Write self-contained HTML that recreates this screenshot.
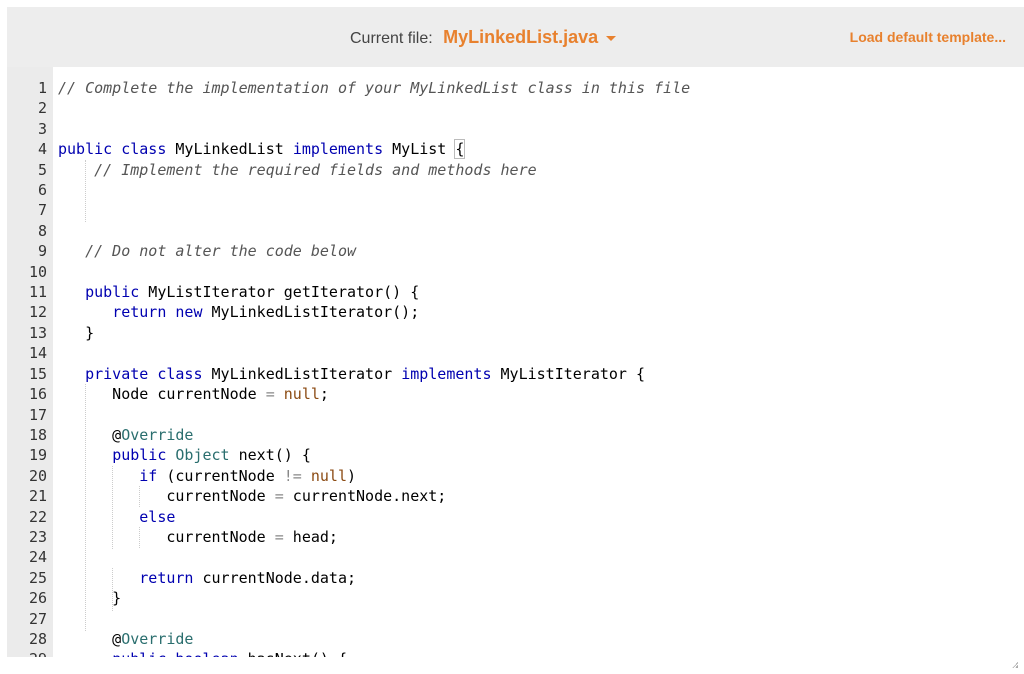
<!DOCTYPE html>
<html><head><meta charset="utf-8"><style>
body{margin:0;width:1024px;height:674px;background:#fff;overflow:hidden;font-family:"Liberation Sans",sans-serif}
.hdr{position:absolute;left:7px;top:7px;width:1017px;height:60px;background:#ededed}
.cf{position:absolute;left:350px;top:27px;font-size:16px;color:#444;white-space:nowrap}
.cf b{color:#e8812e;font-size:18px;font-weight:bold;margin-left:6px}
.tri{display:inline-block;width:0;height:0;border-left:5px solid transparent;border-right:5px solid transparent;border-top:5px solid #e8812e;vertical-align:middle;margin-left:8px}
.ld{position:absolute;right:18px;top:29px;font-size:14px;font-weight:bold;color:#e8812e}
.ed{position:absolute;left:7px;top:67px;width:1017px;height:590px;overflow:hidden}
.gut{position:absolute;left:0;top:0;width:46px;height:590px;background:#ebebeb}
pre{margin:0;position:absolute;top:11px;font-family:"DejaVu Sans Mono",monospace;font-size:15px;line-height:20.4px}
.num{left:0;width:40px;text-align:right;color:#333}
.code{left:51px;color:#000}
.c{color:#555;font-style:italic}.k{color:#0000b0}.n{color:#8b4a12}.t{color:#2a6e6e}.o{color:#888}
.g{position:absolute;width:0;border-left:1px dotted #ccc}
</style></head><body>
<div class="hdr"></div>
<div class="cf">Current file: <b>MyLinkedList.java</b><span class="tri"></span></div>
<div class="ld">Load default template...</div>
<div class="ed">
<div class="gut"></div>
<pre class="num">1
2
3
4
5
6
7
8
9
10
11
12
13
14
15
16
17
18
19
20
21
22
23
24
25
26
27
28
29</pre>
<div class="g" style="left:78px;top:93px;height:62px"></div>
<div class="g" style="left:78px;top:317px;height:247px"></div>
<div class="g" style="left:105px;top:399px;height:83px"></div>
<div class="g" style="left:105px;top:501px;height:43px"></div>
<div class="g" style="left:132px;top:419px;height:21px"></div>
<div class="g" style="left:132px;top:460px;height:21px"></div>
<pre class="code"><span class="c">// Complete the implementation of your MyLinkedList class in this file</span>


<span class="k">public</span> <span class="k">class</span> MyLinkedList <span class="k">implements</span> MyList <span style="outline:1px solid #bbb">{</span>
    <span class="c">// Implement the required fields and methods here</span>



   <span class="c">// Do not alter the code below</span>

   <span class="k">public</span> MyListIterator getIterator() {
      <span class="k">return</span> <span class="k">new</span> MyLinkedListIterator();
   }

   <span class="k">private</span> <span class="k">class</span> MyLinkedListIterator <span class="k">implements</span> MyListIterator {
      Node currentNode <span class="o">=</span> <span class="n">null</span>;

      @<span class="t">Override</span>
      <span class="k">public</span> <span class="t">Object</span> next() {
         <span class="k">if</span> (currentNode <span class="o">!=</span> <span class="n">null</span>)
            currentNode <span class="o">=</span> currentNode.next;
         <span class="k">else</span>
            currentNode <span class="o">=</span> head;

         <span class="k">return</span> currentNode.data;
      }

      @<span class="t">Override</span>
      <span class="k">public</span> <span class="k">boolean</span> hasNext() {</pre>
</div>
<div style="position:absolute;right:6px;bottom:6px;width:6px;height:6px;background:linear-gradient(135deg,transparent 50%,#aaa 50%,#aaa 62%,transparent 62%,transparent 75%,#aaa 75%)"></div>
</body></html>
